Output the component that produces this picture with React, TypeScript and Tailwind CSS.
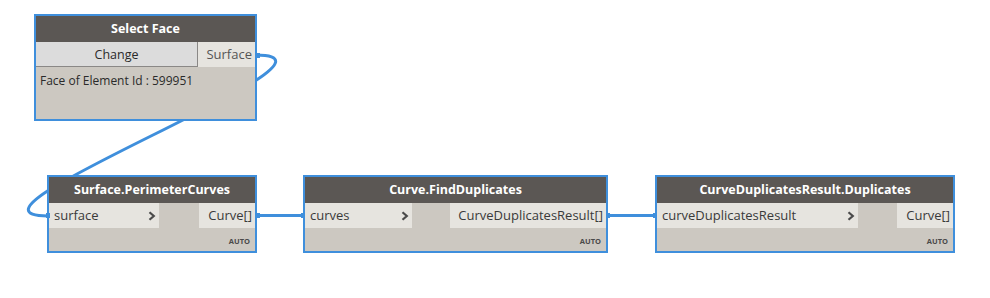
import React from "react";

const font = { fontFamily: '"Open Sans", "Noto Sans", sans-serif' };

interface NodeProps {
  title: string;
  left: number;
  top: number;
  width: number;
  input: string;
  inputWidth: number;
  output: string;
  outputWidth: number;
}

const Node = ({ title, left, top, width, input, inputWidth, output, outputWidth }: NodeProps) => {
  return (
    <div
      className="absolute flex flex-col border-2 border-[#3f8fdc] bg-[#ccc8c1]"
      style={{ left, top, width }}
    >
      <div className="flex h-[26px] items-center justify-center bg-[#5b5754] text-[12.5px] font-bold text-white">
        {title}
      </div>
      <div className="flex h-[25px] justify-between">
        <div
          className="flex items-center justify-between bg-[#e6e4df] pl-[5px] pr-[3px] pt-[1px] text-[13px] text-[#3a3a3a]"
          style={{ width: inputWidth }}
        >
          <span>{input}</span>
          <svg width="8" height="10" viewBox="0 0 8 10">
            <path d="M1.5 1.2 L5.8 5 L1.5 8.8" fill="none" stroke="#4a4a4a" strokeWidth="2.2" />
          </svg>
        </div>
        <div
          className="flex items-center justify-end bg-[#e6e4df] pr-[3px] pt-[1px] text-[13px] text-[#3a3a3a]"
          style={{ width: outputWidth }}
        >
          {output}
        </div>
      </div>
      <div className="flex h-[23px] items-end justify-end pb-[4px] pr-[5px] text-[7.5px] font-bold text-[#4a4a4a]">
        AUTO
      </div>
    </div>
  );
};

export default function App() {
  return (
    <div className="relative h-[298px] w-[990px] overflow-hidden bg-white" style={font}>
      {/* wires, behind the nodes */}
      <svg className="pointer-events-none absolute left-0 top-0" width="990" height="298">
        <g fill="none" stroke="#3f8fdc" strokeWidth="3">
          <path d="M256 55 C372 55 -68 216 48 216" />
          <path d="M256 215.5 L304 215.5" />
          <path d="M607 215.5 L656 215.5" />
        </g>
      </svg>

      {/* Select Face */}
      <div className="absolute left-[34px] top-[14px] flex w-[223px] flex-col border-2 border-[#3f8fdc] bg-[#ccc8c1]">
        <div className="flex h-[26px] items-center justify-center bg-[#5b5754] text-[12.5px] font-bold text-white">
          Select Face
        </div>
        <div className="flex h-[25px]">
          <div className="flex w-[162px] items-center justify-center border-b border-r border-[#8a8886] bg-[#dcdcdc] pt-[2px] text-[12.5px] text-[#2a2a2a]">
            Change
          </div>
          <div className="flex flex-1 items-center justify-end bg-[#e6e4df] pr-[3px] pt-[1px] text-[13px] text-[#555]">
            Surface
          </div>
        </div>
        <div className="h-[52px] pl-[4px] pt-[5px] text-[12px] text-[#2a2a2a]">
          Face of Element Id : 599951
        </div>
      </div>

      <Node
        title="Surface.PerimeterCurves"
        left={47}
        top={175}
        width={210}
        input="surface"
        inputWidth={110}
        output="Curve[]"
        outputWidth={56}
      />
      <Node
        title="Curve.FindDuplicates"
        left={303}
        top={175}
        width={305}
        input="curves"
        inputWidth={107}
        output="CurveDuplicatesResult[]"
        outputWidth={156}
      />
      <Node
        title="CurveDuplicatesResult.Duplicates"
        left={655}
        top={175}
        width={300}
        input="curveDuplicatesResult"
        inputWidth={201}
        output="Curve[]"
        outputWidth={56}
      />

      {/* port nubs over node borders */}
      <svg className="pointer-events-none absolute left-0 top-0" width="990" height="298">
        <g fill="#3f8fdc">
          <rect x="256" y="53" width="4" height="5" />
          <rect x="46" y="213" width="4" height="5" />
          <rect x="256" y="213" width="4" height="5" />
          <rect x="301" y="213" width="4" height="5" />
          <rect x="606" y="213" width="4" height="5" />
          <rect x="653" y="213" width="4" height="5" />
        </g>
      </svg>
    </div>
  );
}
